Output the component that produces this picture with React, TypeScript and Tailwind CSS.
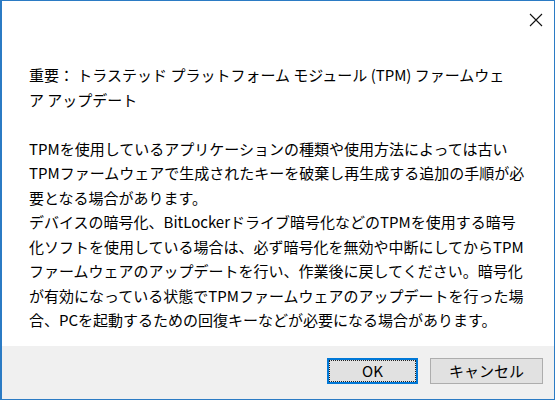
import React from "react";

const font = { fontFamily: '"Noto Sans CJK JP", "Noto Sans", sans-serif' };

export default function App() {
  const title = ["重要： トラステッド プラットフォーム モジュール (TPM) ファームウェ", "ア アップデート"];
  const body = [
    "TPMを使用しているアプリケーションの種類や使用方法によっては古い",
    "TPMファームウェアで生成されたキーを破棄し再生成する追加の手順が必",
    "要となる場合があります。",
    "デバイスの暗号化、BitLockerドライブ暗号化などのTPMを使用する暗号",
    "化ソフトを使用している場合は、必ず暗号化を無効や中断にしてからTPM",
    "ファームウェアのアップデートを行い、作業後に戻してください。暗号化",
    "が有効になっている状態でTPMファームウェアのアップデートを行った場",
    "合、PCを起動するための回復キーなどが必要になる場合があります。",
  ];
  return (
    <div className="flex h-[400px] w-[557px] bg-white" style={font}>
      <div className="flex h-[400px] w-[555px] flex-col border border-l-2 border-[#2b7bc4] bg-white">
        <div className="flex h-[38px] justify-end pr-[11px] pt-[12px]">
          <svg width="14" height="14" viewBox="0 0 14 14">
            <path d="M1 1 L13 13 M13 1 L1 13" stroke="#111" strokeWidth="1.1" fill="none" />
          </svg>
        </div>
        <div className="flex flex-1 flex-col pl-[27px] pt-[24px] text-[15px] leading-[24.5px] text-black">
          {title.map((t, i) => (
            <div key={"t" + i} className="whitespace-nowrap">{t}</div>
          ))}
          <div className="h-[24.5px]" />
          {body.map((t, i) => (
            <div key={"b" + i} className="whitespace-nowrap">{t}</div>
          ))}
        </div>
        <div className="flex h-[53px] items-start justify-end gap-[12px] bg-[#f0f0f0] pr-[11px] pt-[12px]">
          <button className="flex h-[26px] w-[91px] items-stretch border-2 border-[#0078d7] bg-[#e1e1e1] p-0">
            <span className="flex flex-1 items-center justify-center border border-dotted border-[#222] text-[15px] text-black">OK</span>
          </button>
          <button className="flex h-[26px] w-[113px] items-center justify-center border border-[#adadad] bg-[#e1e1e1] p-0 text-[15px] text-black">
            キャンセル
          </button>
        </div>
      </div>
    </div>
  );
}
